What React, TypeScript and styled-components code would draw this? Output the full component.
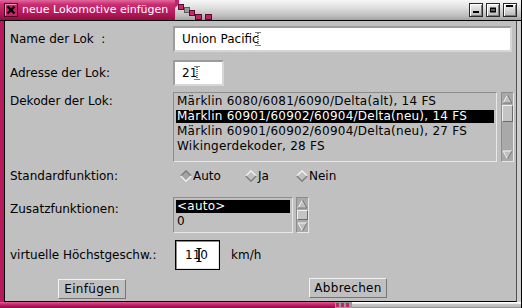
import React from "react";
import styled, { createGlobalStyle } from "styled-components";

const PINK = "#b81a5e";
const PINK_GRAD =
  "linear-gradient(to bottom, #e0699e 0%, #cc2c70 22%, #b8185c 65%, #930c46 100%)";

const GlobalStyle = createGlobalStyle`
  html, body { margin: 0; padding: 0; background: #c0c0c0; }
  body {
    font-family: "DejaVu Sans", "Liberation Sans", sans-serif;
    font-size: 12px;
    color: #000;
  }
  * { box-sizing: border-box; }
`;

const Window = styled.div`
  width: 522px;
  height: 308px;
  display: flex;
  flex-direction: column;
  background: #c0c0c0;
  border-right: 1px solid #000;
  overflow: hidden;
`;

/* ---------- title bar ---------- */
const TitleBar = styled.div`
  height: 21px;
  flex: none;
  display: flex;
  align-items: stretch;
  border-bottom: 1px solid #000;
  background: linear-gradient(to bottom, #f6f6f6 0%, #e2e2e2 35%, #bcbcbc 80%, #a2a2a2 100%);
`;

const TitlePink = styled.div`
  width: 175px;
  display: flex;
  align-items: center;
  gap: 4px;
  padding-left: 4px;
  background: ${PINK_GRAD};
`;

const TitleText = styled.span`
  color: #fff;
  font-size: 11px;
  line-height: 14px;
  white-space: nowrap;
`;

const Stairs = styled.svg`
  flex: none;
  display: block;
`;

const TitleSpacer = styled.div`
  flex: 1;
`;

const WinButtons = styled.div`
  display: flex;
  align-items: center;
  gap: 3px;
  padding-right: 4px;
`;

const WinButton = styled.div`
  width: 14px;
  height: 14px;
  border: 1px solid #2a2a2a;
  background: linear-gradient(to bottom, #f2f2f2, #b8b8b8);
  box-shadow: inset 1px 1px 0 #fff, inset -1px -1px 0 #7c7c7c;
`;

const WinGlyph = styled.svg`
  display: block;
`;

/* ---------- frame ---------- */
const Frame = styled.div`
  flex: 1;
  display: flex;
  flex-direction: column;
  border-left: 4px solid ${PINK};
  border-right: 4px solid #cdcdcd;
`;

const Body = styled.div`
  flex: 1;
  display: flex;
  flex-direction: column;
  border-left: 1px solid #000;
  border-right: 1px solid #505050;
  border-bottom: 1px solid #000;
  padding: 5px 0 0 5px;
`;

const BottomBar = styled.div`
  height: 6px;
  flex: none;
  display: flex;
`;

const BottomPink = styled.div`
  width: 335px;
  background: linear-gradient(to bottom, #e05a96 0%, #c4236a 45%, #8a0a42 100%);
`;

const BottomGrey = styled.div`
  flex: 1;
  background: linear-gradient(to bottom, #ffffff 0%, #ffffff 20%, #c8c8c8 35%, #b8b8b8 80%, #7a7a7a 100%);
`;

/* ---------- form ---------- */
const Row = styled.div<{ $mt: number; $h: number; $top?: boolean }>`
  display: grid;
  grid-template-columns: 163px 1fr;
  align-items: ${(p) => (p.$top ? "start" : "center")};
  margin-top: ${(p) => p.$mt}px;
  height: ${(p) => p.$h}px;
`;

const Label = styled.div<{ $pt?: number }>`
  line-height: 15px;
  white-space: pre;
  padding-top: ${(p) => p.$pt ?? 0}px;
`;

const Controls = styled.div`
  display: flex;
  align-items: stretch;
  height: 100%;
`;

const TextField = styled.div<{ $w: number; $focused?: boolean; $ml?: number; $pl?: number }>`
  width: ${(p) => p.$w}px;
  height: 100%;
  margin-left: ${(p) => p.$ml ?? 0}px;
  background: #fff;
  display: flex;
  align-items: center;
  padding-left: ${(p) => p.$pl ?? 7}px;
  white-space: pre;
  ${(p) =>
    p.$focused
      ? `border: 1px solid #000; box-shadow: inset 1px 1px 0 #8a8a8a, inset -1px -1px 0 #e4e4e4;`
      : `border: 2px solid; border-color: #9c9c9c #d6d6d6 #d6d6d6 #9c9c9c;`}
`;

const CaretSvg = styled.svg<{ $ml: number; $mr: number }>`
  display: block;
  flex: none;
  margin-left: ${(p) => p.$ml}px;
  margin-right: ${(p) => p.$mr}px;
`;

const Unit = styled.div`
  display: flex;
  align-items: center;
  margin-left: 11px;
`;

const ListWrap = styled.div<{ $gap: number }>`
  display: flex;
  gap: ${(p) => p.$gap}px;
  height: 100%;
`;

const ListBox = styled.div<{ $w: number }>`
  width: ${(p) => p.$w}px;
  height: 100%;
  border: 1px solid;
  border-color: #8c8c8c #e8e8e8 #e8e8e8 #8c8c8c;
  padding: 2px;
  display: flex;
  flex-direction: column;
  gap: 2px;
  overflow: hidden;
`;

const ListItem = styled.div<{ $selected?: boolean }>`
  height: 13px;
  flex: none;
  line-height: 13px;
  padding-left: 1px;
  white-space: nowrap;
  letter-spacing: 0.25px;
  background: ${(p) => (p.$selected ? "#000" : "transparent")};
  color: ${(p) => (p.$selected ? "#fff" : "#000")};
`;

const Scroll = styled.div`
  width: 13px;
  height: 100%;
  display: flex;
  flex-direction: column;
  border: 1px solid;
  border-color: #8c8c8c #e8e8e8 #e8e8e8 #8c8c8c;
  background: #a9a9a9;
`;

const ArrowBox = styled.div<{ $h: number }>`
  height: ${(p) => p.$h}px;
  flex: none;
  display: flex;
  align-items: center;
  justify-content: center;
`;

const Trough = styled.div`
  flex: 1;
  display: flex;
  flex-direction: column;
`;

const Thumb = styled.div<{ $h: number }>`
  height: ${(p) => p.$h}px;
  flex: none;
  background: #c4c4c4;
  border: 1px solid;
  border-color: #f0f0f0 #6c6c6c #6c6c6c #f0f0f0;
`;

const RadioGroup = styled.div`
  display: grid;
  grid-template-columns: 65px 51px auto;
  align-items: center;
  margin-left: 7px;
`;

const Radio = styled.div`
  display: flex;
  align-items: center;
  gap: 1px;
`;

const ButtonRow = styled.div`
  display: flex;
  align-items: flex-start;
  margin-top: 9px;
  height: 20px;
  padding-left: 48px;
  gap: 183px;
`;

const PushButton = styled.button<{ $w: number; $dy?: number }>`
  width: ${(p) => p.$w}px;
  height: 20px;
  margin-top: ${(p) => p.$dy ?? 0}px;
  padding: 0;
  font: inherit;
  color: #000;
  background: #c0c0c0;
  border: 1px solid;
  border-color: #f2f2f2 #767676 #767676 #f2f2f2;
  letter-spacing: 0.3px;
`;

/* ---------- drawings ---------- */
const CloseBox = () => (
  <WinGlyph width="14" height="14" viewBox="0 0 14 14">
    <rect x="0.5" y="0.5" width="13" height="13" fill="#c8246a" stroke="#4a0620" />
    <line x1="1.5" y1="1.5" x2="1.5" y2="12.5" stroke="#f08cb8" />
    <line x1="1.5" y1="1.5" x2="12.5" y2="1.5" stroke="#f08cb8" />
    <path d="M3.5 3.5 L10.5 10.5 M10.5 3.5 L3.5 10.5" stroke="#000" strokeWidth="2.4" />
  </WinGlyph>
);

const StairsDeco = () => (
  <Stairs width="42" height="20" viewBox="0 0 42 20">
    <polygon points="0,0 4,0 4,4 0,8" fill="#c02468" />
    <rect x="3.5" y="4.5" width="5" height="5" fill="#c8286c" stroke="#5a0a2c" />
    <rect x="9.5" y="7.5" width="5" height="5" fill="#9a9a9a" stroke="#5a5a5a" />
    <rect x="14.5" y="10.5" width="5" height="5" fill="#c8286c" stroke="#5a0a2c" />
    <rect x="20.5" y="14.5" width="6" height="5" fill="#c02468" stroke="#5a0a2c" />
    <rect x="30.5" y="14.5" width="6" height="5" fill="#c02468" stroke="#5a0a2c" />
  </Stairs>
);

const Caret = ({ dotted, ml, mr }: { dotted?: boolean; ml: number; mr: number }) => (
  <CaretSvg $ml={ml} $mr={mr} width="6" height="14" viewBox="0 0 6 14">
    <g stroke="#000" strokeWidth="1" strokeDasharray={dotted ? "1 1" : undefined}>
      <line x1="0.5" y1="0.5" x2="5.5" y2="0.5" />
      <line x1="0.5" y1="13.5" x2="5.5" y2="13.5" />
      <line x1="3" y1="1" x2="3" y2="13" strokeWidth={dotted ? 1 : 1.6} />
    </g>
  </CaretSvg>
);

const Diamond = ({ selected }: { selected?: boolean }) => (
  <svg width="12" height="12" viewBox="0 0 12 12" style={{ display: "block" }}>
    <polygon points="6,0.8 11.2,6 6,11.2 0.8,6" fill={selected ? "#a4a4a4" : "#c0c0c0"} />
    <polyline
      points="0.8,6 6,0.8 11.2,6"
      fill="none"
      stroke={selected ? "#7a7a7a" : "#f4f4f4"}
      strokeWidth="1.3"
    />
    <polyline
      points="0.8,6 6,11.2 11.2,6"
      fill="none"
      stroke={selected ? "#f4f4f4" : "#7a7a7a"}
      strokeWidth="1.3"
    />
  </svg>
);

const Arrow = ({ up }: { up?: boolean }) => (
  <svg width="11" height="10" viewBox="0 0 11 10" style={{ display: "block" }}>
    {up ? (
      <>
        <polygon points="5.5,1 10,9 1,9" fill="#c0c0c0" />
        <polyline points="1,9 5.5,1" fill="none" stroke="#f4f4f4" />
        <polyline points="5.5,1 10,9 1,9" fill="none" stroke="#777" />
      </>
    ) : (
      <>
        <polygon points="1,1 10,1 5.5,9" fill="#c0c0c0" />
        <polyline points="5.5,9 1,1 10,1" fill="none" stroke="#f4f4f4" />
        <polyline points="10,1 5.5,9" fill="none" stroke="#777" />
      </>
    )}
  </svg>
);

const ScrollBar = ({ arrowH, thumbH, thumbTop }: { arrowH: number; thumbH: number; thumbTop: number }) => (
  <Scroll>
    <ArrowBox $h={arrowH}>
      <Arrow up />
    </ArrowBox>
    <Trough style={{ paddingTop: thumbTop }}>
      <Thumb $h={thumbH} />
    </Trough>
    <ArrowBox $h={arrowH}>
      <Arrow />
    </ArrowBox>
  </Scroll>
);

export default function App() {
  return (
    <>
      <GlobalStyle />
      <Window>
        <TitleBar>
          <TitlePink>
            <CloseBox />
            <TitleText>neue Lokomotive einfügen</TitleText>
          </TitlePink>
          <StairsDeco />
          <TitleSpacer />
          <WinButtons>
            <WinButton>
              <WinGlyph width="12" height="12" viewBox="0 0 12 12">
                <rect x="3" y="7" width="6" height="2" fill="#000" />
              </WinGlyph>
            </WinButton>
            <WinButton>
              <WinGlyph width="12" height="12" viewBox="0 0 12 12">
                <rect x="3" y="3.5" width="6" height="5" fill="#000" />
                <rect x="4" y="5.5" width="4" height="1" fill="#bdbdbd" />
              </WinGlyph>
            </WinButton>
            <WinButton>
              <WinGlyph width="12" height="12" viewBox="0 0 12 12">
                <rect x="2" y="1" width="7" height="2" fill="#000" />
              </WinGlyph>
            </WinButton>
          </WinButtons>
        </TitleBar>

        <Frame>
          <Body>
            <Row $mt={0} $h={26}>
              <Label>Name der Lok  :</Label>
              <Controls>
                <TextField $w={339}>
                  Union Pacific
                  <Caret dotted ml={-4} mr={0} />
                </TextField>
              </Controls>
            </Row>

            <Row $mt={8} $h={26}>
              <Label>Adresse der Lok:</Label>
              <Controls>
                <TextField $w={51}>
                  21
                  <Caret dotted ml={-3} mr={0} />
                </TextField>
              </Controls>
            </Row>

            <Row $mt={6} $h={70} $top>
              <Label $pt={2}>Dekoder der Lok:</Label>
              <ListWrap $gap={4}>
                <ListBox $w={324}>
                  <ListItem>Märklin 6080/6081/6090/Delta(alt), 14 FS</ListItem>
                  <ListItem $selected>Märklin 60901/60902/60904/Delta(neu), 14 FS</ListItem>
                  <ListItem>Märklin 60901/60902/60904/Delta(neu), 27 FS</ListItem>
                  <ListItem>Wikingerdekoder, 28 FS</ListItem>
                </ListBox>
                <ScrollBar arrowH={12} thumbH={17} thumbTop={0} />
              </ListWrap>
            </Row>

            <Row $mt={4} $h={20}>
              <Label>Standardfunktion:</Label>
              <RadioGroup>
                <Radio>
                  <Diamond selected />
                  Auto
                </Radio>
                <Radio>
                  <Diamond />
                  Ja
                </Radio>
                <Radio>
                  <Diamond />
                  Nein
                </Radio>
              </RadioGroup>
            </Row>

            <Row $mt={11} $h={36} $top>
              <Label $pt={5}>Zusatzfunktionen:</Label>
              <ListWrap $gap={3}>
                <ListBox $w={120}>
                  <ListItem $selected>&lt;auto&gt;</ListItem>
                  <ListItem>0</ListItem>
                </ListBox>
                <ScrollBar arrowH={11} thumbH={10} thumbTop={1} />
              </ListWrap>
            </Row>

            <Row $mt={7} $h={30}>
              <Label>virtuelle Höchstgeschw.:</Label>
              <Controls>
                <TextField $w={45} $ml={2} $pl={9} $focused>
                  11
                  <Caret ml={-4} mr={-2} />
                  0
                </TextField>
                <Unit>km/h</Unit>
              </Controls>
            </Row>

            <ButtonRow>
              <PushButton $w={68}>Einfügen</PushButton>
              <PushButton $w={78} $dy={-1}>Abbrechen</PushButton>
            </ButtonRow>
          </Body>
        </Frame>

        <BottomBar>
          <BottomPink />
          <svg width="17" height="6" viewBox="0 0 17 6" style={{ display: "block" }}>
            <rect x="0" y="0" width="17" height="6" fill="#9a9a9a" />
            <rect x="1" y="1" width="3" height="4" fill="#c4236a" />
            <rect x="6" y="1" width="3" height="4" fill="#c4236a" />
            <rect x="11" y="1" width="3" height="4" fill="#c4236a" />
          </svg>
          <BottomGrey />
        </BottomBar>
      </Window>
    </>
  );
}
